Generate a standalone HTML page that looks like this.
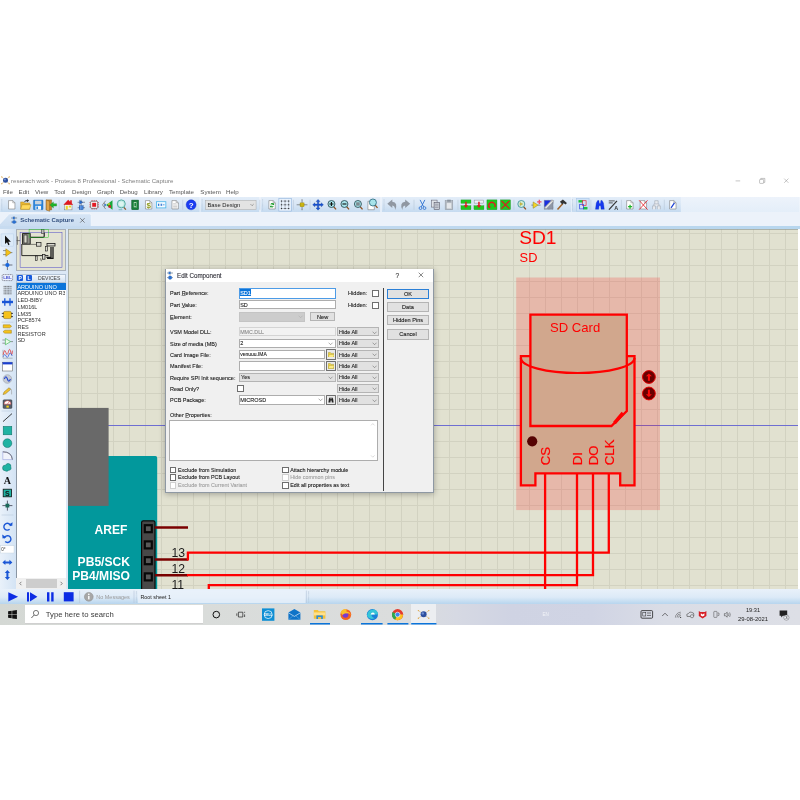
<!DOCTYPE html>
<html lang="en">
<head>
<meta charset="utf-8">
<title>reserach work - Proteus 8 Professional - Schematic Capture</title>
<style>
*{box-sizing:border-box;margin:0;padding:0}
html,body{width:800px;height:800px;background:#fff;overflow:hidden}
body{position:relative;font-family:"Liberation Sans",sans-serif;color:#222}
.abs,.t{position:absolute}
.t{white-space:nowrap;line-height:1}
u{text-decoration-thickness:0.4px;text-underline-offset:0.3px;text-decoration-color:#8a8a8a}
#dialog .t{-webkit-text-stroke:0.1px}
#app{position:absolute;left:0;top:0;width:800px;height:800px;will-change:transform}
/* title */
#title .t{font-size:6.1px;color:#666;top:178.4px}
#menu .t{font-size:6.1px;color:#333;top:189.6px}

#tabbar{left:0;top:211.6px;width:800px;height:15px;background:#ecf2fa}
#tab{left:5px;top:213px;width:87px;height:15px;background:#f4f8fc;border:0.5px solid #b5c6da;border-bottom:none}
#canvas{left:68px;top:229px;width:730px;height:360px;background-color:#e1e1d0;
 background-image:linear-gradient(90deg,#d2d2c1 0,#d2d2c1 1px,transparent 1px),linear-gradient(#d2d2c1 0,#d2d2c1 1px,transparent 1px);
 background-size:16px 16px;background-position:13px 4px;overflow:hidden;box-shadow:inset 0.8px 0.8px 0 #9aa29c}
#lefttools{left:0;top:229px;width:16px;height:360px;background:linear-gradient(90deg,#e9f1fa,#d3e3f4)}
#sidebar{left:16px;top:229px;width:52px;height:360px;background:#dbe7f5}
#status{left:0;top:588.8px;width:800px;height:15.2px;background:linear-gradient(#e9f1fa 0%,#dceaf7 55%,#b7d5ee 100%)}
#taskbar{left:0;top:604.2px;width:800px;height:20.5px;background:linear-gradient(90deg,#d4d8d4 0,#d9dcda 25%,#dbdddd 50%,#d6d9e3 57%,#cfd3e3 64%,#d0d4e4 74%,#dadde6 83%,#dddfe6 100%)}
</style>
</head>
<body>
<div id="app">
<div id="title">
<svg class="abs" style="left:0.6px;top:176.2px" width="9" height="9" viewBox="0 0 9 9"><g stroke="#c9a35a" stroke-width="0.5"><line x1="0.7" y1="0.8" x2="8.3" y2="7.8"/><line x1="8.3" y1="0.8" x2="0.7" y2="7.8"/></g><circle cx="4.5" cy="4.2" r="2.5" fill="#2d4f9e"/><circle cx="3.9" cy="3.5" r="1.1" fill="#6f8fd0"/><g fill="#e0a84a"><circle cx="0.8" cy="0.9" r="0.6"/><circle cx="8.2" cy="0.9" r="0.6"/><circle cx="0.8" cy="7.7" r="0.6"/><circle cx="8.2" cy="7.7" r="0.6"/></g></svg>
<span class="t" style="left:11.10px;top:178px;font-size:6.1px;color:#808080;">reserach work - Proteus 8 Professional - Schematic Capture</span>
<svg class="abs" style="left:730px;top:175px" width="70" height="12" viewBox="0 0 70 12"><g stroke="#8a8a8a" stroke-width="0.5" fill="none"><line x1="5.6" y1="5.9" x2="10.2" y2="5.9"/><rect x="29.6" y="4.4" width="4" height="4" rx="0.6"/><path d="M30.8 4.4V3.4h4v4h-1.2"/><path d="M54.2 3.6l4.2 4.2M58.4 3.6l-4.2 4.2"/></g></svg>
</div>
<div id="menu"><span class="t" style="left:3.00px;top:189px;font-size:6.15px;color:#555;">File</span><span class="t" style="left:18.60px;top:189px;font-size:6.15px;color:#555;">Edit</span><span class="t" style="left:35.10px;top:189px;font-size:6.15px;color:#555;">View</span><span class="t" style="left:54.20px;top:189px;font-size:6.15px;color:#555;">Tool</span><span class="t" style="left:72.00px;top:189px;font-size:6.15px;color:#555;">Design</span><span class="t" style="left:97.00px;top:189px;font-size:6.15px;color:#555;">Graph</span><span class="t" style="left:119.70px;top:189px;font-size:6.15px;color:#555;">Debug</span><span class="t" style="left:144.00px;top:189px;font-size:6.15px;color:#555;">Library</span><span class="t" style="left:169.00px;top:189px;font-size:6.15px;color:#555;">Template</span><span class="t" style="left:200.30px;top:189px;font-size:6.15px;color:#555;">System</span><span class="t" style="left:226.00px;top:189px;font-size:6.15px;color:#555;">Help</span></div>
<svg class="abs" style="left:0;top:196.8px" width="800" height="15.4" viewBox="0 -0.3 800 15.4"><defs><linearGradient id="tbg" x1="0" y1="0" x2="0" y2="1"><stop offset="0" stop-color="#edf3fb"/><stop offset="1" stop-color="#e4eef9"/></linearGradient><linearGradient id="tb2" x1="0" y1="0" x2="0" y2="1"><stop offset="0" stop-color="#e4eef9"/><stop offset="0.5" stop-color="#d8e6f5"/><stop offset="1" stop-color="#c4daf0"/></linearGradient></defs><rect x="0" y="-1" width="800" height="16.4" fill="url(#tbg)"/><rect x="0" y="-1" width="199.4" height="16.2" fill="url(#tb2)"/><rect x="200.6" y="-1" width="58.4" height="16.2" fill="url(#tb2)"/><rect x="261" y="-1" width="119" height="16.2" fill="url(#tb2)"/><rect x="382" y="-1" width="189" height="16.2" fill="url(#tb2)"/><rect x="572" y="-1" width="109" height="16.2" fill="url(#tb2)"/><line x1="1.5" y1="2" x2="1.5" y2="13" stroke="#a9bace" stroke-width="0.7" stroke-dasharray="0.6 0.6"/><path d="M8.30 3.30h4.20l2.2 2.2v6.20h-6.40z" fill="#fff" stroke="#666" stroke-width="0.5"/><path d="M12.50 3.30v2.2h2.2" fill="none" stroke="#666" stroke-width="0.4"/><path d="M20.4 4.6h3l1 1h5v6.4h-9z" fill="#e8b530" stroke="#a67c12" stroke-width="0.4"/><path d="M20.4 12l1.4-4.6h9l-1.6 4.6z" fill="#ffd95a" stroke="#a67c12" stroke-width="0.4"/><path d="M23.5 5.2q1.2-2.6 3.6-2.4l-0.4-1 2.2 1.5-2 1.6-0.2-1q-1.6 0-3.2 1.3z" fill="#333"/><rect x="33.2" y="2.8" width="9.6" height="9.6" rx="0.6" fill="#2b86dd" stroke="#1b5fa8" stroke-width="0.4"/><rect x="34.8" y="3.4" width="6.4" height="3.6" fill="#c9d3dc"/><rect x="35.2" y="8.6" width="5.6" height="3.8" fill="#f4f6f8"/><rect x="36.2" y="9.2" width="1.6" height="2.6" fill="#2b86dd"/><path d="M46 2.6h5.4v10h-5.4z" fill="#c8862a" stroke="#7a4c12" stroke-width="0.4"/><path d="M46 2.6l3.4 1.4v10l-3.4-1.4z" fill="#e2a548" stroke="#7a4c12" stroke-width="0.4"/><path d="M56.4 6.4h-3.2v-1.8l-3.6 3 3.6 3v-1.8h3.2z" fill="#1fb52a" stroke="#0e7a16" stroke-width="0.3"/><line x1="59" y1="2.5" x2="59" y2="12.5" stroke="#b9c8d9" stroke-width="0.6"/><rect x="64.4" y="7" width="7.4" height="5.6" fill="#f7f3e4" stroke="#666" stroke-width="0.4"/><path d="M63.2 7.4l4.8-5 2 2v-1.4h1.6v3l1.4 1.4z" fill="#e0191f"/><rect x="65.6" y="8.6" width="2" height="3.6" fill="#e9d62a"/><rect x="68.6" y="8.4" width="2.2" height="1.8" fill="#e9d62a"/><g stroke="#334" stroke-width="0.5"><line x1="77.4" y1="5" x2="84.8" y2="5"/><line x1="77.4" y1="10.4" x2="84.8" y2="10.4"/><line x1="81" y1="2.4" x2="81" y2="12.8"/></g><path d="M79.4 3l3.2 2-3.2 2z" fill="#2a6fd0" stroke="#123a80" stroke-width="0.3"/><rect x="79" y="8.4" width="4" height="4" fill="#2a6fd0" stroke="#123a80" stroke-width="0.3"/><line x1="80.3" y1="8.4" x2="80.3" y2="12.4" stroke="#9cc0f0" stroke-width="0.5"/><line x1="81.7" y1="8.4" x2="81.7" y2="12.4" stroke="#9cc0f0" stroke-width="0.5"/><g stroke="#d42a2a" stroke-width="0.7"><path d="M89.2 5.4h9.6M89.2 7.5h9.6M89.2 9.6h9.6M91.9 2.7v9.6M94 2.7v9.6M96.1 2.7v9.6"/></g><rect x="90.5" y="4" width="7" height="7" rx="0.8" fill="#fff" stroke="#444" stroke-width="0.6"/><rect x="92" y="5.5" width="4" height="4" fill="#e21b23"/><path d="M112.3 3v9.4l-6.4-4.6z" fill="#1aa73a"/><rect x="108.3" y="8" width="2.4" height="2.4" fill="#e21b23"/><rect x="107.7" y="6" width="2" height="1.4" fill="#e9d62a"/><path d="M105.5 3.4l-3.2 4.2 3.2 4.2M104.3 5.6q1.6 2 0 4" fill="none" stroke="#555" stroke-width="0.6"/><circle cx="104.9" cy="7.6" r="0.9" fill="#2a6fd0"/><line x1="123.3" y1="9.6" x2="125.7" y2="12.4" stroke="#8a5a2a" stroke-width="1.3"/><circle cx="121.1" cy="6.6" r="4" fill="#bfe9e2" stroke="#4aa79c" stroke-width="0.9"/><circle cx="121.1" cy="6.6" r="2.4" fill="#dcf5f0"/><line x1="118.5" y1="12.4" x2="122.1" y2="12.4" stroke="#4aa79c" stroke-width="0.6"/><rect x="131.6" y="2.8" width="6.8" height="9.6" fill="#17803a" stroke="#0b4f22" stroke-width="0.5"/><rect x="133.4" y="4.6" width="3.2" height="5.6" fill="#bfe8c6" stroke="#0b4f22" stroke-width="0.3"/><rect x="134.2" y="5.6" width="1.6" height="3.4" fill="#17803a"/><path d="M145.30 3.30h4.20l2.2 2.2v6.20h-6.40z" fill="#fff" stroke="#666" stroke-width="0.5"/><path d="M149.50 3.30v2.2h2.2" fill="none" stroke="#666" stroke-width="0.4"/><text x="148.5" y="10.4" font-size="8" font-weight="bold" fill="#8f9c1c" text-anchor="middle" font-family="Liberation Sans,sans-serif">$</text><rect x="156.3" y="4.4" width="9.4" height="6.2" fill="#f2fbff" stroke="#49b4ea" stroke-width="0.8"/><g fill="#2a6fd0"><rect x="157.8" y="6.4" width="1" height="2.2"/><rect x="159.6" y="6.4" width="0.6" height="2.2"/><rect x="161" y="6.4" width="1" height="2.2"/><rect x="162.8" y="7.2" width="1.6" height="0.7"/></g><path d="M171.80 3.30h4.20l2.2 2.2v6.20h-6.40z" fill="#fff" stroke="#666" stroke-width="0.5"/><path d="M176.00 3.30v2.2h2.2" fill="none" stroke="#666" stroke-width="0.4"/><g stroke="#999" stroke-width="0.45"><line x1="173" y1="6.4" x2="176" y2="6.4"/><line x1="173" y1="7.8" x2="177" y2="7.8"/><line x1="173" y1="9.2" x2="177" y2="9.2"/><line x1="173" y1="10.6" x2="177" y2="10.6"/></g><line x1="182.6" y1="2.5" x2="182.6" y2="12.5" stroke="#b9c8d9" stroke-width="0.6"/><circle cx="191" cy="7.5" r="5" fill="#1a3cf2" stroke="#1030c0" stroke-width="0.4"/><text x="191" y="10.3" font-size="8" font-weight="bold" fill="#fff" text-anchor="middle" font-family="Liberation Sans,sans-serif">?</text><line x1="202" y1="2" x2="202" y2="13" stroke="#a9bace" stroke-width="0.7" stroke-dasharray="0.6 0.6"/><rect x="205.5" y="3" width="50.5" height="9.4" fill="#e3e3e3" stroke="#a8a8a8" stroke-width="0.5"/><text x="207.4" y="9.6" font-size="5.8" fill="#222" font-family="Liberation Sans,sans-serif">Base Design</text><path d="M250.4 6.8l1.6 1.6 1.6-1.6" fill="none" stroke="#555" stroke-width="0.5"/><line x1="259.7" y1="2.5" x2="259.7" y2="12.5" stroke="#b9c8d9" stroke-width="0.6"/><line x1="262.5" y1="2" x2="262.5" y2="13" stroke="#a9bace" stroke-width="0.7" stroke-dasharray="0.6 0.6"/><path d="M268.80 3.30h4.20l2.2 2.2v6.20h-6.40z" fill="#fff" stroke="#666" stroke-width="0.5"/><path d="M273.00 3.30v2.2h2.2" fill="none" stroke="#666" stroke-width="0.4"/><path d="M270.4 7.2a1.8 1.8 0 0 1 3-1l0.6-0.8v2.2h-2.2l0.8-0.7a1 1 0 0 0-1.4 0.6z" fill="#1a9a2a"/><path d="M273.6 8.8a1.8 1.8 0 0 1-3 1l-0.6 0.8v-2.2h2.2l-0.8 0.7a1 1 0 0 0 1.4-0.6z" fill="#1a9a2a"/><rect x="278.8" y="1.2" width="12.4" height="12.6" fill="#e9f2fc" stroke="#8fb2dc" stroke-width="0.6"/><g stroke="#7a8494" stroke-width="0.45"><path d="M280.6 3.8h8.8M280.6 7.5h8.8M280.6 11.2h8.8M281.4 2.6v9.8M285 2.6v9.8M288.6 2.6v9.8"/></g><rect x="280.84999999999997" y="3.3499999999999996" width="1.1" height="0.9" fill="#222"/><rect x="280.84999999999997" y="7.05" width="1.1" height="0.9" fill="#222"/><rect x="280.84999999999997" y="10.75" width="1.1" height="0.9" fill="#222"/><rect x="284.45" y="3.3499999999999996" width="1.1" height="0.9" fill="#222"/><rect x="284.45" y="7.05" width="1.1" height="0.9" fill="#222"/><rect x="284.45" y="10.75" width="1.1" height="0.9" fill="#222"/><rect x="288.05" y="3.3499999999999996" width="1.1" height="0.9" fill="#222"/><rect x="288.05" y="7.05" width="1.1" height="0.9" fill="#222"/><rect x="288.05" y="10.75" width="1.1" height="0.9" fill="#222"/><line x1="293.4" y1="2.5" x2="293.4" y2="12.5" stroke="#b9c8d9" stroke-width="0.6"/><path d="M296.6 7.5h10.8M302 2.2v10.6" stroke="#333" stroke-width="0.5"/><path d="M301.1 2.6h1.8M301.1 12.4h1.8" stroke="#999" stroke-width="0.5"/><rect x="300" y="5.6" width="4" height="3.8" fill="#f0d818" stroke="#8a7a00" stroke-width="0.4"/><path d="M300 7.5h4M300 6.5h4M300 8.5h4" stroke="#6a5a00" stroke-width="0.3"/><line x1="310" y1="2.5" x2="310" y2="12.5" stroke="#b9c8d9" stroke-width="0.6"/><path d="M318 2.1l2 2.2h-1.3v2.5h2.5v-1.3l2.2 2-2.2 2v-1.3h-2.5v2.5h1.3l-2 2.2-2-2.2h1.3v-2.5h-2.5v1.3l-2.2-2 2.2-2v1.3h2.5v-2.5h-1.3z" fill="#1a56d6" stroke="#0a2f8a" stroke-width="0.3"/><line x1="333.6" y1="9.3" x2="336" y2="12.1" stroke="#8f4f1c" stroke-width="1.3"/><circle cx="331.4" cy="6.7" r="3.5" fill="#a6e3ea" stroke="#2c4a52" stroke-width="0.85"/><path d="M329.4 6.7h4M331.4 4.7v4" stroke="#111" stroke-width="1.1"/><line x1="346.6" y1="9.3" x2="349" y2="12.1" stroke="#8f4f1c" stroke-width="1.3"/><circle cx="344.4" cy="6.7" r="3.5" fill="#a6e3ea" stroke="#2c4a52" stroke-width="0.85"/><path d="M342.4 6.7h4" stroke="#111" stroke-width="1.1"/><line x1="360.1" y1="9.3" x2="362.5" y2="12.1" stroke="#8f4f1c" stroke-width="1.3"/><circle cx="357.9" cy="6.7" r="3.5" fill="#a6e3ea" stroke="#2c4a52" stroke-width="0.85"/><rect x="356.1" y="5" width="3.6" height="3.4" fill="#7d8a90"/><path d="M367.90 4.00h4.20l2.2 2.2v6.20h-6.40z" fill="#fff" stroke="#666" stroke-width="0.5"/><path d="M372.10 4.00v2.2h2.2" fill="none" stroke="#666" stroke-width="0.4"/><line x1="375.1" y1="7.8" x2="377.5" y2="10.6" stroke="#8f4f1c" stroke-width="1.3"/><circle cx="372.9" cy="5.2" r="3.5" fill="#a6e3ea" stroke="#2c6a80" stroke-width="0.85"/><line x1="384" y1="2" x2="384" y2="13" stroke="#a9bace" stroke-width="0.7" stroke-dasharray="0.6 0.6"/><path d="M395.1 12.6q3.4-7.4-2.8-8.2v-2.2l-5 4.2 5 4.2v-2.4q2.8 0.4 2.8 4.4z" fill="#9098a2"/><path d="M402.4 12.6q-3.4-7.4 2.8-8.2v-2.2l5 4.2-5 4.2v-2.4q-2.8 0.4-2.8 4.4z" fill="#9098a2"/><line x1="414" y1="2.5" x2="414" y2="12.5" stroke="#b9c8d9" stroke-width="0.6"/><path d="M420.1 2.6l3.6 7M424.9 2.6l-3.6 7" stroke="#2a6fd0" stroke-width="0.9" fill="none"/><circle cx="420.5" cy="10.8" r="1.4" fill="none" stroke="#2a6fd0" stroke-width="0.8"/><circle cx="424.5" cy="10.8" r="1.4" fill="none" stroke="#2a6fd0" stroke-width="0.8"/><rect x="431.5" y="2.8" width="5.6" height="7" fill="#dfe3e8" stroke="#556" stroke-width="0.5"/><rect x="434.1" y="5" width="5.6" height="7.4" fill="#c9ced6" stroke="#445" stroke-width="0.5"/><path d="M435.1 7h3.4M435.1 8.6h3.4M435.1 10.2h3.4" stroke="#667" stroke-width="0.4"/><rect x="445.2" y="3.4" width="7.6" height="9" fill="#b9bfc7" stroke="#8a929c" stroke-width="0.5"/><rect x="447.2" y="2.4" width="3.6" height="2" fill="#8a929c"/><rect x="446.6" y="5.6" width="5.2" height="6" fill="#e4e7eb" stroke="#9aa1aa" stroke-width="0.3"/><line x1="458" y1="2.5" x2="458" y2="12.5" stroke="#b9c8d9" stroke-width="0.6"/><rect x="461" y="2.6" width="10" height="3.4" fill="#1fc81f" stroke="#12901a" stroke-width="0.3"/><rect x="461" y="8.4" width="10" height="4" fill="#1fc81f" stroke="#12901a" stroke-width="0.3"/><path d="M466 4.4v4.4" stroke="#e01820" stroke-width="1.5"/><path d="M463.8 8l2.2 2.8 2.2-2.8z" fill="#e01820"/><rect x="474.2" y="2.8" width="9.6" height="3" fill="#eef3f8" stroke="#7a8088" stroke-width="0.45"/><rect x="474" y="8.4" width="10" height="4" fill="#1fc81f" stroke="#12901a" stroke-width="0.3"/><path d="M479 4.4v4.4" stroke="#e01820" stroke-width="1.5"/><path d="M476.8 8l2.2 2.8 2.2-2.8z" fill="#e01820"/><rect x="487" y="2.6" width="10" height="9.8" fill="#1fc81f" stroke="#12901a" stroke-width="0.4"/><path d="M489.4 10.2a3.2 3.2 0 1 1 5.4-0.4" fill="none" stroke="#e01820" stroke-width="1.3"/><path d="M487.8 8.6l1.4 2.6 2-1.8z" fill="#e01820"/><rect x="500.5" y="2.6" width="10" height="9.8" fill="#1fc81f" stroke="#12901a" stroke-width="0.4"/><path d="M501.5 3.6l8 7.8M509.5 3.6l-8 7.8" stroke="#e01820" stroke-width="1.2"/><line x1="514" y1="2.5" x2="514" y2="12.5" stroke="#b9c8d9" stroke-width="0.6"/><line x1="523.6" y1="9.3" x2="526" y2="12.1" stroke="#8f4f1c" stroke-width="1.3"/><circle cx="521.4" cy="6.7" r="3.5" fill="#d6f0d0" stroke="#3a8fa0" stroke-width="0.85"/><path d="M520.2 5.2l2.6 1.5-2.6 1.5z" fill="#f0d020" stroke="#555" stroke-width="0.3"/><path d="M531.4 7.8h2M538 7.8h2.6" stroke="#333" stroke-width="0.5"/><path d="M533.2 4.6l5 3.2-5 3.2z" fill="#f3d52a" stroke="#7a6800" stroke-width="0.4"/><path d="M537.2 4.6h4.4M539.4 2.4v4.4" stroke="#f0506a" stroke-width="1.3"/><rect x="544.4" y="3" width="8.8" height="9" fill="#8f97a6" stroke="#4a5262" stroke-width="0.4" stroke-dasharray="0.8 0.5"/><path d="M544.6 3.2h6.4l-6.4 6.4z" fill="#1a2fe0"/><path d="M545.6 11l7-7.4" stroke="#e8e8e8" stroke-width="1.4"/><path d="M551 2.8l2.8 0.4-0.8 2.6z" fill="#ddd" stroke="#666" stroke-width="0.3"/><path d="M557.6 12.2l5.4-6" stroke="#a0632a" stroke-width="1.5"/><path d="M560 4.4l3-2.2 4 3.6-1.2 1.4-2-1.2-1.4 1.2z" fill="#333"/><line x1="572.6" y1="2" x2="572.6" y2="13" stroke="#a9bace" stroke-width="0.7" stroke-dasharray="0.6 0.6"/><rect x="576.8" y="1.2" width="12.4" height="12.6" fill="#cfe2f6" stroke="#a9c7e8" stroke-width="0.6"/><rect x="578.6" y="2.8" width="4.4" height="2.4" fill="#1fc040"/><rect x="583.2" y="9.6" width="4.4" height="2.6" fill="#1fc040"/><rect x="582.4" y="3.4" width="3.8" height="4.6" fill="none" stroke="#e0283a" stroke-width="0.7"/><rect x="579.8" y="7" width="3.8" height="4.6" fill="none" stroke="#2a3fe0" stroke-width="0.7"/><line x1="591" y1="2.5" x2="591" y2="12.5" stroke="#b9c8d9" stroke-width="0.6"/><path d="M595.6 12l0.8-6.4 1.4-2.4h1.2l0.4 3h1.2l0.4-3h1.2l1.4 2.4 0.8 6.4h-3.2l-0.4-3.6h-1.6l-0.4 3.6z" fill="#1438f0" stroke="#0a2ab0" stroke-width="0.3"/><path d="M608.9 3.6h6M608.9 5.6h4" stroke="#333" stroke-width="0.8"/><path d="M609.1 12.4l8-8.8" stroke="#333" stroke-width="1.2"/><text x="614.5" y="12.8" font-size="5.4" font-weight="bold" fill="#333" font-family="Liberation Sans,sans-serif">A</text><line x1="621.6" y1="2.5" x2="621.6" y2="12.5" stroke="#b9c8d9" stroke-width="0.6"/><path d="M626.80 3.30h4.20l2.2 2.2v6.20h-6.40z" fill="#fff" stroke="#666" stroke-width="0.5"/><path d="M631.00 3.30v2.2h2.2" fill="none" stroke="#666" stroke-width="0.4"/><path d="M628.2 9.4h4M630.2 7.4v4" stroke="#1fb52a" stroke-width="1.3"/><path d="M640.30 3.30h4.20l2.2 2.2v6.20h-6.40z" fill="#fff" stroke="#666" stroke-width="0.5"/><path d="M644.50 3.30v2.2h2.2" fill="none" stroke="#666" stroke-width="0.4"/><path d="M639.3 3l8.4 9.4M647.7 3l-8.4 9.4" stroke="#e21b23" stroke-width="0.8"/><path d="M652.7 12v-3.4h3v3.4M657.5 12v-3.4h3v3.4M654.1 8.6v-2h5v2M654.9 6.4v-3h3.4v3" fill="#e8ebef" stroke="#a3aab3" stroke-width="0.6"/><line x1="664.5" y1="2.5" x2="664.5" y2="12.5" stroke="#b9c8d9" stroke-width="0.6"/><path d="M669.80 3.30h4.20l2.2 2.2v6.20h-6.40z" fill="#fff" stroke="#666" stroke-width="0.5"/><path d="M674.00 3.30v2.2h2.2" fill="none" stroke="#666" stroke-width="0.4"/><path d="M671.2 10.6l3.4-5" stroke="#1a3fd6" stroke-width="1.2"/></svg>
<div id="tabbar" class="abs"></div>
<div class="abs" style="left:0;top:225.8px;width:800px;height:3.2px;background:linear-gradient(90deg,#c7dbf0,#b7d6ee)"></div>
<svg class="abs" style="left:0;top:212px" width="100" height="14" viewBox="0 0 100 14"><defs><linearGradient id="tabg" x1="0" y1="0" x2="0" y2="1"><stop offset="0" stop-color="#d6e5f5"/><stop offset="1" stop-color="#cbddf1"/></linearGradient></defs>
<path d="M0 11.8L8.6 2.6Q9.4 1.8 10.6 1.8H89.6Q91.2 1.8 91.2 3.4V14H0z" fill="url(#tabg)"/>
<path d="M0 11.8L8.6 2.6Q9.4 1.8 10.6 1.8H89.6Q91.2 1.8 91.2 3.4V14" fill="none" stroke="#f6f9fd" stroke-width="0.7"/>
<g transform="translate(10.9,4.2)"><path d="M0.2 1.8h6M0.2 5.8h6M3.2 0v7.6" stroke="#345" stroke-width="0.5"/><path d="M2 0.4l2.6 1.4-2.6 1.4z" fill="#2a6fd0"/><rect x="1.4" y="4.4" width="3.6" height="2.8" rx="1.2" fill="#2a6fd0"/></g>
<path d="M80.2 6.2l4.4 4.4M84.6 6.2l-4.4 4.4" stroke="#444" stroke-width="0.6"/>
</svg>
<span class="t" style="left:20.20px;top:218px;font-size:5.95px;color:#33507f;font-weight:bold;">Schematic Capture</span>
<div id="lefttools" class="abs"></div>
<div id="sidebar" class="abs"></div>
<div class="abs" style="left:16px;top:229.3px;width:50px;height:41.7px;background:#e3e3d2;border:0.6px solid #a9b1ba"></div>
<svg class="abs" style="left:16px;top:229px" width="50" height="42" viewBox="16 229 50 42">
<rect x="20.1" y="232.3" width="41.9" height="35" fill="none" stroke="#4a46c8" stroke-width="0.5"/>
<g fill="none" stroke="#161616">
<rect x="22.6" y="233.6" width="7.6" height="10.6" stroke-width="0.9" fill="#8f8f88"/>
<rect x="24" y="235" width="3" height="8" stroke-width="0.6" fill="#d8d8cc"/>
<path d="M21.8 244v11.6h26.6" stroke-width="0.9"/>
<path d="M30.4 237.4h12.4q1.4 0 1.4-1.2v-3.4" stroke-width="1.1"/>
<rect x="41.6" y="229.6" width="2.4" height="4" stroke-width="0.5" fill="#bbb"/>
<path d="M30.6 244.4h6" stroke-width="0.5"/>
<rect x="36.6" y="242.6" width="4.4" height="3.6" stroke-width="0.7" fill="#d9d9cf"/>
<rect x="47" y="243.4" width="8" height="2.6" stroke-width="0.8" fill="#d9d9cf"/>
<rect x="45.6" y="246.4" width="2" height="4.6" stroke-width="0.6" fill="#d9d9cf"/>
<path d="M51 247v10.4h-4.6M53 247v11.4h-6" stroke-width="1.3"/>
<rect x="42.6" y="254.6" width="2.4" height="4.6" stroke-width="0.7" fill="#d9d9cf"/>
<rect x="35.4" y="256" width="1.8" height="4.6" stroke-width="0.6" fill="#d9d9cf"/>
<path d="M40.6 258.4l0.8 2.8" stroke-width="0.6"/>
<path d="M17.4 236.4v8.4M16.6 240.6h3.6" stroke-width="0.7" stroke="#555"/>
</g>
<rect x="29.1" y="229.4" width="19.5" height="8" fill="none" stroke="#2fc52f" stroke-width="0.5"/>
</svg>
<div class="abs" style="left:16px;top:273.6px;width:50px;height:9.4px;background:linear-gradient(#f3f7fc,#d3e2f3);border:0.5px solid #b4c4d6"></div>
<div class="abs" style="left:17.2px;top:275px;width:6.1px;height:5.8px;background:#1659dc;border-radius:1px"></div><span class="t" style="left:18.55px;top:275.5px;font-size:5px;font-weight:bold;color:#fff">P</span>
<div class="abs" style="left:26.2px;top:275px;width:6.1px;height:5.8px;background:#1659dc;border-radius:1px"></div><span class="t" style="left:27.55px;top:275.5px;font-size:5px;font-weight:bold;color:#fff">L</span>
<span class="t" style="left:38px;top:275.7px;font-size:5.1px;color:#444">DEVICES</span>
<div class="abs" style="left:16.4px;top:283.2px;width:49.6px;height:295.2px;background:#fff;border-left:0.5px solid #8a96a3;overflow:hidden">
<div class="abs" style="left:0;top:0;width:50px;height:6.5px;background:#0b74da"></div>
</div>
<span class="t" style="left:17.40px;top:285px;font-size:5.55px;color:#fff;max-width:48.6px;overflow:hidden">ARDUINO UNO</span>
<span class="t" style="left:17.40px;top:291px;font-size:5.55px;color:#333;max-width:48.6px;overflow:hidden">ARDUINO UNO R3</span>
<span class="t" style="left:17.40px;top:298px;font-size:5.55px;color:#333;max-width:48.6px;overflow:hidden">LED-BIBY</span>
<span class="t" style="left:17.40px;top:305px;font-size:5.55px;color:#333;max-width:48.6px;overflow:hidden">LM016L</span>
<span class="t" style="left:17.40px;top:312px;font-size:5.55px;color:#333;max-width:48.6px;overflow:hidden">LM35</span>
<span class="t" style="left:17.40px;top:318px;font-size:5.55px;color:#333;max-width:48.6px;overflow:hidden">PCF8574</span>
<span class="t" style="left:17.40px;top:325px;font-size:5.55px;color:#333;max-width:48.6px;overflow:hidden">RES</span>
<span class="t" style="left:17.40px;top:332px;font-size:5.55px;color:#333;max-width:48.6px;overflow:hidden">RESISTOR</span>
<span class="t" style="left:17.40px;top:338px;font-size:5.55px;color:#333;max-width:48.6px;overflow:hidden">SD</span>
<div class="abs" style="left:16.4px;top:578.4px;width:49.6px;height:10.2px;background:#f0f0f0"></div>
<div class="abs" style="left:25.9px;top:579.4px;width:31.6px;height:8.2px;background:#cdcdcd"></div>
<svg class="abs" style="left:16px;top:578px" width="50" height="11" viewBox="0 0 50 11"><path d="M5.4 3.8l-1.6 1.7 1.6 1.7M44.6 3.8l1.6 1.7-1.6 1.7" fill="none" stroke="#555" stroke-width="0.7"/></svg>
<svg class="abs" style="left:0;top:229px" width="16" height="361" viewBox="0 229 16 361"><rect x="1" y="233.9" width="12.6" height="12.2" fill="#dceaf8" stroke="#b7cfe8" stroke-width="0.5"/><path d="M5 235.4v8.6l2-1.8 1.3 3 1.3-0.6-1.3-2.9h2.6z" fill="#111"/><path d="M3 250.6h3M3 254.6h3M9.6 252.6h2.8" stroke="#333" stroke-width="0.5"/><path d="M5.8 248.79999999999998l5.4 3.8-5.4 3.8z" fill="#f5c21a" stroke="#8a6a00" stroke-width="0.4"/><path d="M7.4 260v10M2.4 265h10" stroke="#223" stroke-width="0.6"/><circle cx="7.4" cy="265" r="2.1" fill="#1767e0"/><rect x="2.2" y="274.6" width="10.4" height="6" rx="0.8" fill="#eef3ff" stroke="#334" stroke-width="0.5" stroke-dasharray="1.2 0.5"/><text x="7.4" y="279.20000000000005" font-size="4.4" font-weight="bold" fill="#4a56d0" text-anchor="middle" font-family="Liberation Sans,sans-serif">LBL</text><g stroke="#333" stroke-width="0.7"><path d="M3.6 286.40000000000003h8M3.6 288.2h8M3.6 290.2h8M3.6 292.0h8M3.6 293.8h8" stroke-dasharray="1.1 0.4"/></g><path d="M2 302h11" stroke="#1a56d6" stroke-width="2.4"/><path d="M4.8 298.2v7.6M10 298.2v7.6" stroke="#1a56d6" stroke-width="1.3"/><rect x="3.4" y="311.4" width="8" height="7.2" rx="1.6" fill="#f5c21a" stroke="#8a6a00" stroke-width="0.5"/><path d="M1.8 313.4h2M1.8 316.6h2M11 313.4h2M11 316.6h2" stroke="#333" stroke-width="0.9"/><path d="M3.2 324.79999999999995h6.6l1.8 1.5-1.8 1.5H3.2z" fill="#f5c21a" stroke="#8a6a00" stroke-width="0.4"/><path d="M4.8 330.2h6.6v3H4.8l-1.8-1.5z" fill="#f5c21a" stroke="#8a6a00" stroke-width="0.4"/><path d="M2.4 340.0h3M2.4 343.20000000000005h3M10.6 341.6h2.4" stroke="#444" stroke-width="0.5"/><path d="M5.4 338.40000000000003l5.2 3.2-5.2 3.2z" fill="#eafbe8" stroke="#2fb040" stroke-width="0.6"/><path d="M3 349.8v8.4h9.6" stroke="#666" stroke-width="0.4" fill="none"/><path d="M3.2 354.8q1.2-7 2.6-2.4t2.6-0.6 2.4 0.4 1.6-1.6" fill="none" stroke="#e0282a" stroke-width="0.7"/><path d="M3.2 356.8q1.4-4 2.8-0.8t2.8-1 3.4 1" fill="none" stroke="#2a4fd0" stroke-width="0.7"/><rect x="2.6" y="362.20000000000005" width="9.8" height="8.8" fill="#fff" stroke="#555" stroke-width="0.5"/><rect x="2.6" y="362.20000000000005" width="9.8" height="2.2" fill="#1a3fd0"/><circle cx="7.4" cy="379" r="4.3" fill="#c7ccd4" stroke="#9097a2" stroke-width="0.5"/><path d="M4.4 379q1.5-4.6 3 0t3 0" fill="none" stroke="#1a3fd0" stroke-width="1.1"/><path d="M3 394.6l1-2.6 5-4.2 1.6 1.6-5 4.4z" fill="#f1c232" stroke="#7a5d00" stroke-width="0.4"/><path d="M9.4 387.8q2.6 0.6 2.2 6.6" fill="none" stroke="#888" stroke-width="0.5"/><rect x="3" y="399.8" width="9" height="8.6" rx="1" fill="#555e6b" stroke="#2b3038" stroke-width="0.4"/><path d="M4 404.2a3.5 3.5 0 0 1 7 0z" fill="#fff" stroke="#c33" stroke-width="0.5"/><path d="M7.5 404l2-2.6" stroke="#c22" stroke-width="0.5"/><rect x="6.4" y="405.6" width="2.4" height="2" fill="#f5d21a"/><line x1="1.6" y1="411" x2="13.4" y2="411" stroke="#b9c9db" stroke-width="0.6"/><line x1="1.6" y1="322.2" x2="13.4" y2="322.2" stroke="#b9c9db" stroke-width="0.6"/><path d="M3 421.6l9-8" stroke="#111" stroke-width="0.8"/><rect x="3.2" y="426.40000000000003" width="8.6" height="8.4" fill="#1fb3a3" stroke="#0b6a60" stroke-width="0.5"/><circle cx="7.4" cy="443.2" r="4.4" fill="#1fb3a3" stroke="#0b6a60" stroke-width="0.5"/><path d="M2.8 451.8q8.8 0 9.6 7.8H2.8z" fill="#f1f4fb" stroke="#8d95d8" stroke-width="0.5"/><path d="M2.8 451.8q8.8 0 9.6 7.8" fill="none" stroke="#333" stroke-width="0.6"/><path d="M2.6 467.8q0-3 3-2.6 0.8-2.2 3.2-1.6 2.6 0.8 2 3.2 1.2 3.4-2.4 3.6-1.4 1.6-3.2 0.4-2.8-0.2-2.6-3z" fill="#1fb3a3" stroke="#0b6a60" stroke-width="0.5"/><text x="7.4" y="484.4" font-size="10" font-weight="bold" fill="#111" text-anchor="middle" font-family="Liberation Serif,serif">A</text><rect x="3.2" y="489.2" width="8.4" height="7.6" fill="#1fb3a3" stroke="#111" stroke-width="0.8"/><text x="7.4" y="495.5" font-size="7" font-weight="bold" fill="#111" text-anchor="middle" font-family="Liberation Sans,sans-serif">S</text><path d="M7.4 500.6v10M2.4 505.6h10" stroke="#223" stroke-width="0.7"/><rect x="5.5" y="503.70000000000005" width="3.8" height="3.8" fill="#1b6a5a"/><line x1="1.6" y1="515" x2="13.4" y2="515" stroke="#b9c9db" stroke-width="0.6"/><path d="M10.6 526.0a3.4 3.4 0 1 0-1 3.2" fill="none" stroke="#1a56d6" stroke-width="1.4"/><path d="M8.4 524.8000000000001l3.8 1.2 0.4-3.8z" fill="#1a56d6"/><path d="M4.2 538.4a3.4 3.4 0 1 1 1 3.2" fill="none" stroke="#1a56d6" stroke-width="1.4"/><path d="M6.4 537.2l-3.8 1.2-0.4-3.8z" fill="#1a56d6"/><rect x="0.6" y="545.8" width="13.4" height="7.2" fill="#fff" stroke="#c3cfdd" stroke-width="0.4"/><text x="1.2" y="551.0" font-size="4.6" fill="#333" font-family="Liberation Sans,sans-serif">0°</text><path d="M2.4 562.4l3-2.6v1.6h4v-1.6l3 2.6-3 2.6v-1.6h-4v1.6z" fill="#1a56d6"/><path d="M7.4 570l2.6 3h-1.6v4h1.6l-2.6 3-2.6-3h1.6v-4h-1.6z" fill="#1a56d6"/></svg>
<div id="canvas" class="abs"></div>
<svg class="abs" style="left:68px;top:230px" width="730" height="359" viewBox="68 230 730 359"><line x1="68" y1="425.5" x2="798" y2="425.5" stroke="#6262d2" stroke-width="0.9"/><path d="M68 456.1h87.4q1.8 0 1.8 1.8V590H68z" fill="#02989c"/><rect x="68" y="407.9" width="40.6" height="98" fill="#696969"/><path d="M141.6 590V522.4q0-1.6 1.6-1.6h10.2q1.6 0 1.6 1.6V590z" fill="#484848" stroke="#0a0a0a" stroke-width="1.2"/><rect x="144.8" y="525.2" width="7" height="7" fill="#585858" stroke="#080808" stroke-width="2.2"/><rect x="144.8" y="541.4" width="7" height="7" fill="#585858" stroke="#080808" stroke-width="2.2"/><rect x="144.8" y="557.2" width="7" height="7" fill="#585858" stroke="#080808" stroke-width="2.2"/><rect x="144.8" y="573.4" width="7" height="7" fill="#585858" stroke="#080808" stroke-width="2.2"/><line x1="155" y1="527.6" x2="188" y2="527.6" stroke="#7a0000" stroke-width="2.5"/><line x1="155" y1="559.6" x2="188" y2="559.6" stroke="#7a0000" stroke-width="2.5"/><line x1="155" y1="575.3" x2="188" y2="575.3" stroke="#7a0000" stroke-width="2.5"/><g font-family="Liberation Sans,sans-serif" font-weight="bold" font-size="12.1" fill="#fff" text-anchor="end"><text x="127.4" y="534">AREF</text><text x="130" y="566.2">PB5/SCK</text><text x="130" y="580.4">PB4/MISO</text></g><g font-family="Liberation Sans,sans-serif" font-size="12.2" fill="#1a1a1a"><text x="171.4" y="557">13</text><text x="171.4" y="573">12</text><text x="171.4" y="589">11</text></g><rect x="516.2" y="277.5" width="143.8" height="232.6" fill="rgba(255,0,0,0.18)"/><g font-family="Liberation Sans,sans-serif" fill="#f00"><text x="519.2" y="244.4" font-size="19.2">SD1</text><text x="519.6" y="261.8" font-size="12.8">SD</text></g><path d="M520.9 356.2H634.5V485.4H620.2V473.4H535.4V485.4H520.9z" fill="#d1a78d" stroke="#f00" stroke-width="2.3"/><path d="M530.4 314.6H626.8V411L611.4 426H530.4z" fill="#d1a78d" stroke="#f00" stroke-width="2.3"/><path d="M623 413L614.4 423.2" stroke="#f00" stroke-width="3.6"/><path d="M520.9 358A56.8 15 0 0 0 634.5 358" fill="none" stroke="#f00" stroke-width="2.2"/><text x="550" y="331.6" font-size="13.1" fill="#f00" font-family="Liberation Sans,sans-serif">SD Card</text><circle cx="532.2" cy="441.3" r="5.1" fill="#560303"/><circle cx="648.9" cy="377" r="6.4" fill="#6a0000" stroke="#e80000" stroke-width="1"/><path d="M648.9 380.8V375.6" stroke="#ff0a0a" stroke-width="2" fill="none"/><path d="M645.9 376.2L648.9 373.4L651.9 376.2z" fill="#ff0a0a"/><circle cx="648.9" cy="393.5" r="6.4" fill="#6a0000" stroke="#e80000" stroke-width="1"/><path d="M648.9 389.7V394.9" stroke="#ff0a0a" stroke-width="2" fill="none"/><path d="M645.9 394.3L648.9 397.1L651.9 394.3z" fill="#ff0a0a"/><text transform="translate(550.3,465.2) rotate(-90)" font-size="13.2" fill="#f00" stroke="#f00" stroke-width="0.2" font-family="Liberation Sans,sans-serif">CS</text><text transform="translate(582,465.2) rotate(-90)" font-size="13.2" fill="#f00" stroke="#f00" stroke-width="0.2" font-family="Liberation Sans,sans-serif">DI</text><text transform="translate(598,465.2) rotate(-90)" font-size="13.2" fill="#f00" stroke="#f00" stroke-width="0.2" font-family="Liberation Sans,sans-serif">DO</text><text transform="translate(614.2,465.2) rotate(-90)" font-size="13.2" fill="#f00" stroke="#f00" stroke-width="0.2" font-family="Liberation Sans,sans-serif">CLK</text><path d="M608.8 473.4V552.6H187.9V560.4" stroke="#f00" stroke-width="2.3" fill="none"/><path d="M593 473.4V575.2H187" stroke="#f00" stroke-width="2.3" fill="none"/><path d="M577 473.4V585.2H208.8V592" stroke="#f00" stroke-width="2.3" fill="none"/><path d="M545.1 473.4V592" stroke="#f00" stroke-width="2.3" fill="none"/></svg>
<div id="dialog">
<div class="abs" style="left:165.40px;top:268.60px;width:268.20px;height:224.20px;background:#f0f0f0;border:0.5px solid #8e98a3;box-shadow:0 1px 6px rgba(0,0,0,0.3)"></div>
<div class="abs" style="left:165.90px;top:269.10px;width:267.20px;height:12.90px;background:#fff"></div>
<svg class="abs" style="left:167.4px;top:270.6px" width="6" height="9" viewBox="0 0 6 9"><path d="M0 2h6M0 6.6h6M3 0v9" stroke="#345" stroke-width="0.5"/><path d="M1.6 0.6l2.8 1.5-2.8 1.5z" fill="#2a6fd0"/><rect x="1.4" y="5" width="3.4" height="3.2" rx="0.8" fill="#2a6fd0"/></svg>
<span class="t" style="left:177.00px;top:273px;font-size:6.8px;color:#2a2a33;transform:scaleX(0.915);transform-origin:0 50%">Edit Component</span>
<span class="t" style="left:395.40px;top:273px;font-size:6.6px;color:#333;">?</span>
<svg class="abs" style="left:417.8px;top:272.2px" width="6" height="6" viewBox="0 0 6 6"><path d="M0.7 0.7l4.5 4.5M5.2 0.7l-4.5 4.5" stroke="#222" stroke-width="0.55"/></svg>
<span class="t" style="left:170.00px;top:291px;font-size:5.5px;color:#1a1a1a;">Part <u>R</u>eference:</span>
<span class="t" style="left:170.00px;top:303px;font-size:5.5px;color:#1a1a1a;">Part <u>V</u>alue:</span>
<span class="t" style="left:170.00px;top:315px;font-size:5.5px;color:#1a1a1a;"><u>E</u>lement:</span>
<span class="t" style="left:170.00px;top:330px;font-size:5.5px;color:#1a1a1a;">VSM Model DLL:</span>
<span class="t" style="left:170.00px;top:342px;font-size:5.5px;color:#1a1a1a;">Size of media (MB)</span>
<span class="t" style="left:170.00px;top:353px;font-size:5.5px;color:#1a1a1a;">Card Image File:</span>
<span class="t" style="left:170.00px;top:364px;font-size:5.5px;color:#1a1a1a;">Manifest File:</span>
<span class="t" style="left:170.00px;top:376px;font-size:5.5px;color:#1a1a1a;">Require SPI Init sequence:</span>
<span class="t" style="left:170.00px;top:387px;font-size:5.5px;color:#1a1a1a;">Read Only?</span>
<span class="t" style="left:170.00px;top:398px;font-size:5.5px;color:#1a1a1a;">PCB Package:</span>
<span class="t" style="left:170.00px;top:413px;font-size:5.5px;color:#1a1a1a;">Other <u>P</u>roperties:</span>
<div class="abs" style="left:238.50px;top:288.30px;width:97.20px;height:10.40px;background:#fff;border:0.8px solid #4d9be6"></div>
<div class="abs" style="left:239.90px;top:289.40px;width:11.30px;height:6.60px;background:#0b74da"></div>
<span class="t" style="left:240.20px;top:291px;font-size:5.5px;color:#fff;">SD1</span>
<div class="abs" style="left:238.70px;top:300.40px;width:97.00px;height:9.10px;background:#fff;border:0.5px solid #adadad"></div>
<span class="t" style="left:240.20px;top:303px;font-size:5.5px;color:#1a1a1a;">SD</span>
<div class="abs" style="left:238.70px;top:311.80px;width:66.80px;height:10.00px;background:#cccccc;border:0.5px solid #c4c4c4"></div>
<div class="abs" style="left:310.20px;top:312.40px;width:24.60px;height:8.80px;background:#e1e1e1;border:0.5px solid #b4b4b4"></div>
<span class="t" style="left:317.00px;top:315px;font-size:5.6px;color:#1a1a1a;">New</span>
<div class="abs" style="left:238.70px;top:327.30px;width:97.00px;height:9.20px;background:#f2f2f2;border:0.5px solid #d4d4d4"></div>
<span class="t" style="left:240.20px;top:330px;font-size:5.3px;color:#8c8c8c;">MMC.DLL</span>
<div class="abs" style="left:238.70px;top:338.60px;width:97.00px;height:9.40px;background:#fff;border:0.5px solid #adadad"></div>
<span class="t" style="left:240.20px;top:341px;font-size:5.5px;color:#1a1a1a;">2</span>
<div class="abs" style="left:238.70px;top:349.90px;width:85.90px;height:9.60px;background:#fff;border:0.5px solid #adadad"></div>
<span class="t" style="left:240.20px;top:352px;font-size:5.0px;color:#1a1a1a;">venuuu.IMA</span>
<div class="abs" style="left:238.70px;top:361.30px;width:85.90px;height:9.60px;background:#fff;border:0.5px solid #adadad"></div>
<div class="abs" style="left:238.70px;top:372.60px;width:97.00px;height:9.10px;background:#e1e1e1;border:0.5px solid #b4b4b4"></div>
<span class="t" style="left:241.00px;top:375px;font-size:5.5px;color:#1a1a1a;">Yes</span>
<div class="abs" style="left:237.40px;top:385.10px;width:6.60px;height:6.60px;background:#fff;border:0.5px solid #6e6e6e"></div>
<div class="abs" style="left:238.70px;top:395.00px;width:85.90px;height:9.50px;background:#fff;border:0.5px solid #adadad"></div>
<span class="t" style="left:240.20px;top:398px;font-size:5.5px;color:#1a1a1a;">MICROSD</span>
<svg class="abs" style="left:298.4px;top:315.2px" width="5.2" height="3.6" viewBox="0 0 5.2 3.6"><path d="M0.6 0.7l2 2 2-2" fill="none" stroke="#a8a8a8" stroke-width="0.5"/></svg>
<svg class="abs" style="left:328.4px;top:342.0px" width="5.2" height="3.6" viewBox="0 0 5.2 3.6"><path d="M0.6 0.7l2 2 2-2" fill="none" stroke="#555" stroke-width="0.5"/></svg>
<svg class="abs" style="left:328.4px;top:375.79999999999995px" width="5.2" height="3.6" viewBox="0 0 5.2 3.6"><path d="M0.6 0.7l2 2 2-2" fill="none" stroke="#555" stroke-width="0.5"/></svg>
<svg class="abs" style="left:317.59999999999997px;top:398.4px" width="5.2" height="3.6" viewBox="0 0 5.2 3.6"><path d="M0.6 0.7l2 2 2-2" fill="none" stroke="#555" stroke-width="0.5"/></svg>
<div class="abs" style="left:326.00px;top:349.40px;width:9.70px;height:10.40px;background:#e9e9e9;border:0.6px solid #6f6f6f;border-radius:0.6px"></div>
<svg class="abs" style="left:327.8px;top:351.79999999999995px" width="6.4" height="5.6" viewBox="0 0 6.4 5.6"><path d="M0.2 0.6h2.2l0.6 0.8h3v4H0.2z" fill="#f2d53c" stroke="#8a7a20" stroke-width="0.35"/><path d="M0.2 5.4l1-2.8h5l-0.8 2.8z" fill="#fff08a" stroke="#8a7a20" stroke-width="0.3"/></svg>
<div class="abs" style="left:326.00px;top:360.80px;width:9.70px;height:10.40px;background:#e9e9e9;border:0.6px solid #6f6f6f;border-radius:0.6px"></div>
<svg class="abs" style="left:327.8px;top:363.2px" width="6.4" height="5.6" viewBox="0 0 6.4 5.6"><path d="M0.2 0.6h2.2l0.6 0.8h3v4H0.2z" fill="#f2d53c" stroke="#8a7a20" stroke-width="0.35"/><path d="M0.2 5.4l1-2.8h5l-0.8 2.8z" fill="#fff08a" stroke="#8a7a20" stroke-width="0.3"/></svg>
<div class="abs" style="left:326.00px;top:394.60px;width:9.70px;height:10.20px;background:#e9e9e9;border:0.6px solid #6f6f6f;border-radius:0.6px"></div>
<svg class="abs" style="left:328px;top:396.8px" width="6" height="6" viewBox="0 0 6 6"><path d="M0.4 5.4l0.5-3.6 0.8-1.2h0.8l0.2 1.6h0.6l0.2-1.6h0.8l0.8 1.2 0.5 3.6h-1.8l-0.2-2h-1l-0.2 2z" fill="#222"/></svg>
<span class="t" style="left:348.00px;top:291px;font-size:5.6px;color:#1a1a1a;">Hidden:</span>
<div class="abs" style="left:372.00px;top:290.00px;width:7.00px;height:7.00px;background:#fff;border:0.5px solid #6e6e6e"></div>
<span class="t" style="left:348.00px;top:303px;font-size:5.6px;color:#1a1a1a;">Hidden:</span>
<div class="abs" style="left:372.00px;top:301.50px;width:7.00px;height:7.00px;background:#fff;border:0.5px solid #6e6e6e"></div>
<div class="abs" style="left:337.20px;top:327.20px;width:41.60px;height:9.30px;background:#e1e1e1;border:0.5px solid #b4b4b4"></div>
<span class="t" style="left:339.00px;top:330px;font-size:5.45px;color:#1a1a1a;">Hide All</span>
<svg class="abs" style="left:371.7px;top:330.59999999999997px" width="5.2" height="3.6" viewBox="0 0 5.2 3.6"><path d="M0.6 0.7l2 2 2-2" fill="none" stroke="#555" stroke-width="0.5"/></svg>
<div class="abs" style="left:337.20px;top:338.54px;width:41.60px;height:9.30px;background:#e1e1e1;border:0.5px solid #b4b4b4"></div>
<span class="t" style="left:339.00px;top:341px;font-size:5.45px;color:#1a1a1a;">Hide All</span>
<svg class="abs" style="left:371.7px;top:341.93999999999994px" width="5.2" height="3.6" viewBox="0 0 5.2 3.6"><path d="M0.6 0.7l2 2 2-2" fill="none" stroke="#555" stroke-width="0.5"/></svg>
<div class="abs" style="left:337.20px;top:349.88px;width:41.60px;height:9.30px;background:#e1e1e1;border:0.5px solid #b4b4b4"></div>
<span class="t" style="left:339.00px;top:353px;font-size:5.45px;color:#1a1a1a;">Hide All</span>
<svg class="abs" style="left:371.7px;top:353.28px" width="5.2" height="3.6" viewBox="0 0 5.2 3.6"><path d="M0.6 0.7l2 2 2-2" fill="none" stroke="#555" stroke-width="0.5"/></svg>
<div class="abs" style="left:337.20px;top:361.22px;width:41.60px;height:9.30px;background:#e1e1e1;border:0.5px solid #b4b4b4"></div>
<span class="t" style="left:339.00px;top:364px;font-size:5.45px;color:#1a1a1a;">Hide All</span>
<svg class="abs" style="left:371.7px;top:364.61999999999995px" width="5.2" height="3.6" viewBox="0 0 5.2 3.6"><path d="M0.6 0.7l2 2 2-2" fill="none" stroke="#555" stroke-width="0.5"/></svg>
<div class="abs" style="left:337.20px;top:372.56px;width:41.60px;height:9.30px;background:#e1e1e1;border:0.5px solid #b4b4b4"></div>
<span class="t" style="left:339.00px;top:375px;font-size:5.45px;color:#1a1a1a;">Hide All</span>
<svg class="abs" style="left:371.7px;top:375.96px" width="5.2" height="3.6" viewBox="0 0 5.2 3.6"><path d="M0.6 0.7l2 2 2-2" fill="none" stroke="#555" stroke-width="0.5"/></svg>
<div class="abs" style="left:337.20px;top:383.90px;width:41.60px;height:9.30px;background:#e1e1e1;border:0.5px solid #b4b4b4"></div>
<span class="t" style="left:339.00px;top:387px;font-size:5.45px;color:#1a1a1a;">Hide All</span>
<svg class="abs" style="left:371.7px;top:387.29999999999995px" width="5.2" height="3.6" viewBox="0 0 5.2 3.6"><path d="M0.6 0.7l2 2 2-2" fill="none" stroke="#555" stroke-width="0.5"/></svg>
<div class="abs" style="left:337.20px;top:395.24px;width:41.60px;height:9.30px;background:#e1e1e1;border:0.5px solid #b4b4b4"></div>
<span class="t" style="left:339.00px;top:398px;font-size:5.45px;color:#1a1a1a;">Hide All</span>
<svg class="abs" style="left:371.7px;top:398.64px" width="5.2" height="3.6" viewBox="0 0 5.2 3.6"><path d="M0.6 0.7l2 2 2-2" fill="none" stroke="#555" stroke-width="0.5"/></svg>
<div class="abs" style="left:383.40px;top:288.40px;width:0.80px;height:202.40px;background:#454545"></div>
<div class="abs" style="left:387.20px;top:288.90px;width:41.60px;height:10.60px;background:#e1e1e1;border:0.9px solid #2b7fd6"></div>
<span class="t" style="left:387.20px;top:292px;font-size:5.6px;color:#1a1a1a;width:41.6px;text-align:center">OK</span>
<div class="abs" style="left:387.20px;top:301.60px;width:41.60px;height:10.80px;background:#e1e1e1;border:0.5px solid #b4b4b4"></div>
<span class="t" style="left:387.20px;top:305px;font-size:5.6px;color:#1a1a1a;width:41.6px;text-align:center">Data</span>
<div class="abs" style="left:387.20px;top:314.50px;width:41.60px;height:10.90px;background:#e1e1e1;border:0.5px solid #b4b4b4"></div>
<span class="t" style="left:387.20px;top:318px;font-size:5.6px;color:#1a1a1a;width:41.6px;text-align:center">Hidden Pins</span>
<div class="abs" style="left:387.20px;top:329.10px;width:41.60px;height:10.60px;background:#e1e1e1;border:0.5px solid #b4b4b4"></div>
<span class="t" style="left:387.20px;top:332px;font-size:5.6px;color:#1a1a1a;width:41.6px;text-align:center">Cancel</span>
<div class="abs" style="left:169.40px;top:420.10px;width:208.40px;height:41.00px;background:#fff;border:0.5px solid #adadad"></div>
<svg class="abs" style="left:370px;top:422px" width="6" height="38" viewBox="0 0 6 38"><path d="M1 3.4l1.8-1.8 1.8 1.8M1 33.4l1.8 1.8 1.8-1.8" fill="none" stroke="#c4c4c4" stroke-width="0.6"/></svg>
<div class="abs" style="left:169.70px;top:466.50px;width:6.70px;height:6.70px;background:#fff;border:0.5px solid #6e6e6e"></div>
<span class="t" style="left:178.00px;top:468px;font-size:5.4px;color:#1a1a1a;">Exclude from Simulation</span>
<div class="abs" style="left:169.70px;top:474.30px;width:6.70px;height:6.70px;background:#fff;border:0.5px solid #6e6e6e"></div>
<span class="t" style="left:178.00px;top:475px;font-size:5.4px;color:#1a1a1a;">Exclude from PCB Layout</span>
<div class="abs" style="left:169.70px;top:482.00px;width:6.70px;height:6.70px;background:#fff;border:0.5px solid #cfcfcf"></div>
<span class="t" style="left:178.00px;top:483px;font-size:5.4px;color:#a0a0a0;">Exclude from Current Variant</span>
<div class="abs" style="left:282.10px;top:466.50px;width:6.70px;height:6.70px;background:#fff;border:0.5px solid #6e6e6e"></div>
<span class="t" style="left:290.20px;top:468px;font-size:5.4px;color:#1a1a1a;">Attach hierarchy module</span>
<div class="abs" style="left:282.10px;top:474.30px;width:6.70px;height:6.70px;background:#fff;border:0.5px solid #cfcfcf"></div>
<span class="t" style="left:290.20px;top:475px;font-size:5.4px;color:#a0a0a0;">Hide common pins</span>
<div class="abs" style="left:282.10px;top:482.00px;width:6.70px;height:6.70px;background:#fff;border:0.5px solid #6e6e6e"></div>
<span class="t" style="left:290.20px;top:483px;font-size:5.4px;color:#1a1a1a;">Edit all properties as text</span>
</div>
<div id="status" class="abs"></div>
<svg class="abs" style="left:0;top:589px" width="800" height="15" viewBox="0 589 800 15"><path d="M8.3 592.2l9.8 4.6-9.8 4.6z" fill="#0c2ce4"/><path d="M27 592.2h2v9.2h-2zM30 592.2l7.4 4.6-7.4 4.6z" fill="#0c2ce4"/><path d="M47 592.2h2.4v9.2H47zM51.2 592.2h2.4v9.2h-2.4z" fill="#0c2ce4"/><rect x="63.8" y="592.2" width="9.8" height="9.2" fill="#0c2ce4"/><line x1="79.6" y1="590.6" x2="79.6" y2="603" stroke="#b5c5d8" stroke-width="0.6"/><circle cx="88.8" cy="596.8" r="4.4" fill="#a7a7a7" stroke="#8b8b8b" stroke-width="0.5"/><rect x="88.1" y="596" width="1.4" height="3.4" fill="#fff"/><circle cx="88.8" cy="594.4" r="0.8" fill="#fff"/><text x="96.2" y="598.7" font-size="5.5" fill="#9a9a9a" font-family="Liberation Sans,sans-serif">No Messages</text><line x1="134" y1="590.6" x2="134" y2="603" stroke="#b5c5d8" stroke-width="0.6"/><line x1="136.4" y1="591" x2="136.4" y2="603" stroke="#a9bace" stroke-width="0.7" stroke-dasharray="0.6 0.6"/><rect x="138" y="590.2" width="167.6" height="12.8" fill="#eaf2fb" opacity="0.75"/><text x="140.4" y="598.7" font-size="5.4" fill="#222" font-family="Liberation Sans,sans-serif">Root sheet 1</text><line x1="306.4" y1="590.6" x2="306.4" y2="603" stroke="#b5c5d8" stroke-width="0.6"/><line x1="308.6" y1="591" x2="308.6" y2="603" stroke="#a9bace" stroke-width="0.7" stroke-dasharray="0.6 0.6"/></svg>
<div id="taskbar" class="abs"></div>
<div class="abs" style="left:25.2px;top:605px;width:178px;height:19.4px;background:#fff;border-bottom:0.5px solid #d0d0d0"></div>
<div class="abs" style="left:411.2px;top:604.2px;width:25.2px;height:20.5px;background:#eceef1"></div>
<svg class="abs" style="left:0;top:604px" width="800" height="22" viewBox="0 604 800 22"><path d="M8.1 611.3l3.6-0.5v3.5H8.1zM12.2 610.7l4.7-0.7v4.3h-4.7zM8.1 614.8h3.6v3.5l-3.6-0.5zM12.2 614.8h4.7v4.3l-4.7-0.7z" fill="#111"/><circle cx="36" cy="613" r="2.6" fill="none" stroke="#222" stroke-width="0.6"/><path d="M34.2 615l-2.8 3" stroke="#222" stroke-width="0.7"/><text x="45.8" y="617.2" font-size="7.7" fill="#3a3a3a" font-family="Liberation Sans,sans-serif">Type here to search</text><circle cx="216.3" cy="614.6" r="3.3" fill="none" stroke="#111" stroke-width="1"/><path d="M238.4 612.2h4.4v4.8h-4.4zM236.8 613.4v2.4M244.6 611.8v1M244.6 614.4v2.6" fill="none" stroke="#222" stroke-width="0.7"/><rect x="262" y="608.4" width="12.4" height="12.4" fill="#0f8fd4"/><circle cx="268.2" cy="614.6" r="4" fill="none" stroke="#fff" stroke-width="0.7"/><text x="268.2" y="616" font-size="3.2" fill="#fff" font-weight="bold" text-anchor="middle" font-family="Liberation Sans,sans-serif">DELL</text><path d="M288.4 612.6l6-3.6 6 3.6v7.2h-12z" fill="#0f74c8"/><path d="M288.4 612.8l6 3.6 6-3.6" fill="none" stroke="#fff" stroke-width="0.6"/><path d="M288.4 619.8l4.6-4M300.4 619.8l-4.6-4" stroke="#8cc4f0" stroke-width="0.4"/><path d="M313.8 610h4l1 1.2h6.6v7.6h-11.6z" fill="#f4c23a"/><rect x="313.8" y="612.4" width="11.6" height="3" fill="#ffe08a"/><rect x="316.4" y="615.4" width="6.4" height="3.6" fill="#2a8ad8"/><rect x="318" y="617" width="3.2" height="2" fill="#f4c23a"/><circle cx="345.8" cy="614.6" r="5.4" fill="#f5621e"/><circle cx="345.4" cy="614.8" r="3" fill="#7a3ad0"/><path d="M340.6 612.6q1-3.6 5-3.6 1.6 0.8 0.8 2.4 4 0.6 4.4 4-1-2.6-3.8-2-2.4-0.6-4.6 1.6z" fill="#fbbf2c"/><circle cx="372.4" cy="614.6" r="5.6" fill="#1b7fd8"/><path d="M367 616q0.6-6.4 6.4-6.4 4.4 0.6 4.6 5h-6.4q-0.4 2.8 3 3.6-4.8 2.2-7.6-2.2z" fill="#35c6d8"/><path d="M370.6 614.4q0.6-2 2.6-1.8 1.6 0.4 1.6 2z" fill="#fff"/><circle cx="397.6" cy="614.6" r="5.6" fill="#e33b2e"/><path d="M397.6 614.6l-5-2.6a5.6 5.6 0 0 0 2.6 7.8z" fill="#2da94f"/><path d="M397.6 614.6l-2.4 5.2a5.6 5.6 0 0 0 7.8-5.2z" fill="#fcc31e"/><circle cx="397.6" cy="614.6" r="2.4" fill="#3f86f0" stroke="#fff" stroke-width="0.6"/><g stroke="#c9a35a" stroke-width="0.5"><path d="M418.4 610.6l10.4 7.6M428.8 610.6l-10.4 7.6"/></g><circle cx="423.6" cy="614.2" r="3" fill="#2d4f9e"/><circle cx="422.8" cy="613.4" r="1.2" fill="#6f8fd0"/><g fill="#e0a84a"><circle cx="418.4" cy="610.6" r="0.7"/><circle cx="428.8" cy="610.6" r="0.7"/><circle cx="418.4" cy="618.2" r="0.7"/><circle cx="428.8" cy="618.2" r="0.7"/></g><rect x="310" y="623" width="20.0" height="1.5" fill="#0b74da"/><rect x="361" y="623" width="21.6" height="1.5" fill="#0b74da"/><rect x="387.4" y="623" width="21.0" height="1.5" fill="#0b74da"/><rect x="411.2" y="623" width="25.2" height="1.5" fill="#0b74da"/><text x="542.4" y="616.2" font-size="4.6" fill="#f2f4f8" font-family="Liberation Sans,sans-serif">EN</text><rect x="641" y="610.6" width="11.6" height="7.6" rx="1" fill="none" stroke="#222" stroke-width="0.8"/><rect x="642.8" y="612.6" width="3" height="3.4" fill="none" stroke="#222" stroke-width="0.5"/><path d="M647 613h4M647 615.4h4" stroke="#222" stroke-width="0.6"/><path d="M662.2 616l2.8-2.8 2.8 2.8" fill="none" stroke="#222" stroke-width="0.6"/><path d="M675.4 617.6a5.4 5.4 0 0 1 5.4-5.4M677 617.6a3.8 3.8 0 0 1 3.8-3.8M678.6 617.6a2.2 2.2 0 0 1 2.2-2.2" fill="none" stroke="#444" stroke-width="0.5"/><circle cx="680.6" cy="617.4" r="0.6" fill="#444"/><path d="M687 616.4q-1.2-2.6 1.6-3 1-2.2 3.2-1 2.4 0.2 2 2.4 0.6 1.8-1.4 1.8z" fill="none" stroke="#444" stroke-width="0.6"/><circle cx="692" cy="616.2" r="1.6" fill="#dcdfe6" stroke="#444" stroke-width="0.5"/><path d="M698.8 611l1.6 1h4.4l1.6-1v5l-3.8 2.4-3.8-2.4z" fill="#d61f26"/><path d="M700.8 613.2v2.2l1.8 1.2 1.8-1.2v-2.2l-1.8 1.2z" fill="#fff"/><rect x="713.8" y="611.4" width="3.2" height="6" rx="0.6" fill="none" stroke="#444" stroke-width="0.5"/><path d="M717.6 613h1.4v2.4h-1.4" fill="none" stroke="#444" stroke-width="0.5"/><path d="M724.4 613.6h1.2l1.6-1.4v5l-1.6-1.4h-1.2z" fill="none" stroke="#333" stroke-width="0.5"/><path d="M728.4 613.4q0.8 1.3 0 2.6M729.6 612.4q1.4 2.3 0 4.6" fill="none" stroke="#333" stroke-width="0.45"/><text x="753" y="612" font-size="5.6" fill="#222" text-anchor="middle" font-family="Liberation Sans,sans-serif">19:31</text><text x="753" y="620.6" font-size="5.85" fill="#222" text-anchor="middle" font-family="Liberation Sans,sans-serif">29-08-2021</text><path d="M779.6 610.4h7.6v5.4h-4.4l-1.6 1.6v-1.6h-1.6z" fill="#222"/><circle cx="786.4" cy="617.6" r="2.6" fill="#eef1f6" stroke="#444" stroke-width="0.4"/><text x="786.4" y="619.2" font-size="4.2" fill="#222" text-anchor="middle" font-family="Liberation Sans,sans-serif">3</text></svg>
</div>
</body>
</html>
